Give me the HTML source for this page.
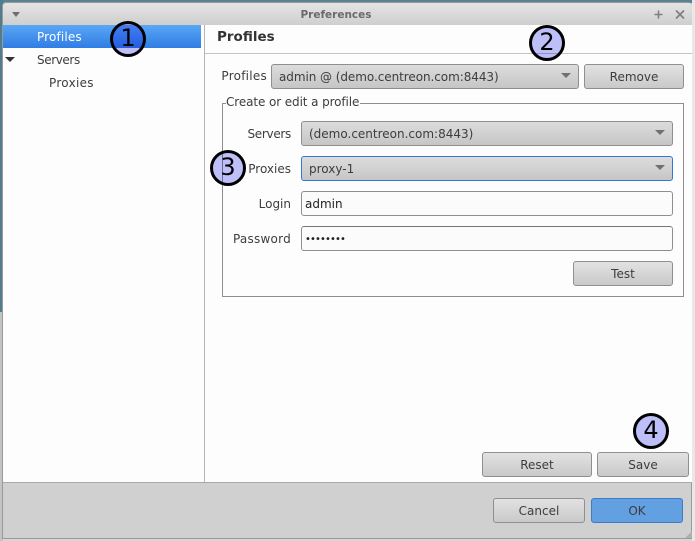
<!DOCTYPE html>
<html><head><meta charset="utf-8"><style>
html,body{margin:0;padding:0;width:695px;height:541px;overflow:hidden;background:#d6d6d6}
body{position:relative;font-family:"DejaVu Sans","Liberation Sans",sans-serif;font-size:12px;color:#3d3d3d}
div{position:absolute;box-sizing:border-box;white-space:nowrap}
.t{line-height:18px}
.r{text-align:right}
.btn{border:1px solid #8f8f8f;border-radius:3px;background:linear-gradient(#e2e2e2,#c9c9c9);text-align:center;line-height:25px;height:25px}
.cb{border:1px solid #8f8f8f;border-radius:3px;background:linear-gradient(#dcdcdc,#c6c6c6);line-height:25px;height:25px;padding-left:7px}
.cb:after{content:"";position:absolute;right:7px;top:8px;border:5px solid transparent;border-top:5px solid #707070;border-bottom:0}
.in{border:1px solid #8f8f8f;border-radius:3px;background:#fbfbfb;line-height:25px;height:25px;padding-left:3px}
.c{width:36px;height:36px;border:3px solid #000;border-radius:50%;background:#c0c0fb;mix-blend-mode:multiply;color:#000;font-size:24px;line-height:29px;text-align:center;font-family:"DejaVu Sans",sans-serif}
</style></head><body>
<div style="left:0;top:0;width:695px;height:3px;background:#5a8290"></div>
<div style="left:0;top:0;width:3px;height:312px;background:#4f7d8c"></div>
<div style="left:0;top:312px;width:3px;height:229px;background:#c4c4c4"></div>
<div style="left:692px;top:0;width:3px;height:541px;background:#e8e8e8"></div>
<div style="left:2px;top:2px;width:690px;height:537px;border:1px solid #9a9a9a;border-radius:4px 4px 0 0;background:#d0d0d0"></div>
<div style="left:3px;top:3px;width:689px;height:22px;background:linear-gradient(#e4e4e4,#cfcfcf);border-radius:3px 3px 0 0"></div>
<div style="left:12px;top:12px;width:0;height:0;border:4px solid transparent;border-top:5px solid #6e6e6e;border-bottom:0"></div>
<div class="t" style="left:210px;top:6px;width:252px;text-align:center;font-weight:bold;font-size:10.5px;color:#6a6a6a">Preferences</div>
<svg style="position:absolute;left:650px;top:6px" width="36" height="16"><path d="M8.500 4.500v8M4.500 8.500h8" stroke="#808080" stroke-width="1.600"/><path d="M26 4.500l8 8M34 4.500l-8 8" stroke="#808080" stroke-width="1.800"/></svg>

<div style="left:3px;top:25px;width:689px;height:458px;background:#fdfdfd"></div>
<div style="left:3px;top:25px;width:198px;height:23px;background:linear-gradient(#5aa6f6,#2f7de4)"></div>
<div class="t" style="left:37px;top:28px;color:#fff;letter-spacing:.15px">Profiles</div>
<div style="left:5px;top:57px;width:0;height:0;border:5px solid transparent;border-top:5px solid #333;border-bottom:0"></div>
<div class="t" style="left:37px;top:51px;letter-spacing:-.4px">Servers</div>
<div class="t" style="left:49px;top:74px;letter-spacing:.3px">Proxies</div>
<div style="left:204px;top:25px;width:1px;height:458px;background:#b5b5b5"></div>
<div class="t" style="left:217px;top:28px;font-weight:bold;font-size:13.500px;color:#333">Profiles</div>
<div style="left:205px;top:53px;width:487px;height:1px;background:#c4c4c4"></div>

<div class="t r" style="left:210px;top:67px;width:57px;letter-spacing:.25px">Profiles</div>
<div class="cb" style="left:271px;top:64px;width:308px;letter-spacing:-.06px">admin @ (demo.centreon.com:8443)</div>
<div class="btn" style="left:584px;top:64px;width:100px">Remove</div>

<div style="left:222px;top:103px;width:462px;height:194px;border:1px solid #8e8e8e"></div>
<div class="t" style="left:226px;top:93px;background:#fdfdfd;padding-right:1px;letter-spacing:-.1px;height:16px">Create or edit a profile</div>

<div class="t r" style="left:220px;top:125px;width:71px;letter-spacing:-.3px">Servers</div>
<div class="cb" style="left:301px;top:121px;width:372px">(demo.centreon.com:8443)</div>
<div class="t r" style="left:220px;top:160px;width:71px">Proxies</div>
<div class="cb" style="left:301px;top:156px;width:372px;border-color:#2f7bd0">proxy-1</div>
<div class="t r" style="left:220px;top:195px;width:71px">Login</div>
<div class="in" style="left:301px;top:191px;width:372px;color:#222">admin</div>
<div class="t r" style="left:220px;top:230px;width:71px;letter-spacing:.25px">Password</div>
<div class="in" style="left:301px;top:226px;width:372px;color:#222;font-size:10px;letter-spacing:-.9px;border-top-color:#777">••••••••</div>
<div class="btn" style="left:573px;top:261px;width:100px">Test</div>

<div class="btn" style="left:482px;top:452px;width:110px">Reset</div>
<div class="btn" style="left:597px;top:452px;width:92px">Save</div>
<div style="left:3px;top:482px;width:689px;height:1px;background:#a8a8a8"></div>
<div class="btn" style="left:493px;top:498px;width:92px">Cancel</div>
<div class="btn" style="left:591px;top:498px;width:92px;background:#62a0e2;border-color:#3a7cc6">OK</div>
<div style="left:685px;top:531px;width:0;height:0;border-left:7px solid transparent;border-bottom:7px solid #b0b0b0"></div>

<div class="c" style="left:110px;top:21px">1</div>
<div class="c" style="left:529px;top:25px">2</div>
<div class="c" style="left:210px;top:150px">3</div>
<div class="c" style="left:633px;top:413px">4</div>
</body></html>
